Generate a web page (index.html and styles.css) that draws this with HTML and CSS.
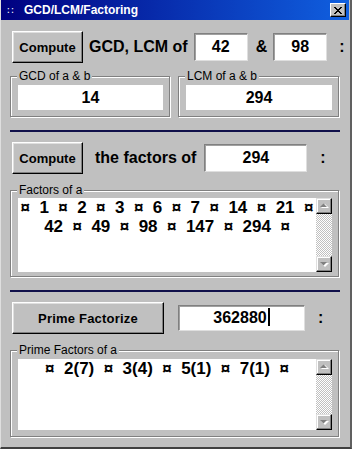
FILE: index.html
```html
<!DOCTYPE html>
<html lang="en">
<head>
  <meta charset="UTF-8" />
  <title>GCD/LCM/Factoring</title>
  <link rel="stylesheet" href="styles.css">
</head>
<body>
  <div class="window">
    <div class="titlebar">
      <span class="sysmenu">∷</span>
      <span class="title">GCD/LCM/Factoring</span>
      <span class="close">
        <svg width="8" height="7" viewBox="0 0 8 7"><path d="M0 0l7 7M1 0l7 7M7 0L0 7M8 0L1 7" stroke="#000" stroke-width="1"/></svg>
      </span>
    </div>

    <div class="client">
      <div class="row row-gcd">
        <button class="btn btn-compute">Compute</button>
        <span class="caption cap-gcd">GCD, LCM of</span>
        <div class="field field-a">42</div>
        <span class="caption amp">&amp;</span>
        <div class="field field-b">98</div>
        <span class="caption colon">:</span>
      </div>

      <div class="groups">
        <fieldset class="group group-gcd">
          <legend>GCD of a &amp; b</legend>
          <div class="result">14</div>
        </fieldset>
        <fieldset class="group group-lcm">
          <legend>LCM of a &amp; b</legend>
          <div class="result">294</div>
        </fieldset>
      </div>

      <div class="sep"></div>

      <div class="row row-factors">
        <button class="btn btn-compute">Compute</button>
        <span class="caption cap-factors">the factors of</span>
        <div class="field field-n">294</div>
        <span class="caption colon">:</span>
      </div>

      <fieldset class="group group-list group-factors">
        <legend>Factors of a</legend>
        <div class="listbox">
          <div class="list-text">
            <div class="line">¤  1  ¤  2  ¤  3  ¤  6  ¤  7  ¤  14  ¤  21  ¤</div>
            <div class="line">42  ¤  49  ¤  98  ¤  147  ¤  294  ¤</div>
          </div>
          <div class="scroll">
            <div class="sbtn"><svg width="14" height="14" viewBox="0 0 14 14"><path d="M4 9h8l-4-4z" fill="#fff"/><path d="M3 8h7L6.5 4.5z" fill="#808080"/></svg></div>
            <div class="track"></div>
            <div class="sbtn"><svg width="14" height="14" viewBox="0 0 14 14"><path d="M4 6h8l-4 4z" fill="#fff"/><path d="M3 5h7L6.5 8.5z" fill="#808080"/></svg></div>
          </div>
        </div>
      </fieldset>

      <div class="sep"></div>

      <div class="row row-prime">
        <button class="btn btn-prime">Prime Factorize</button>
        <div class="field field-p">362880<span class="caret"></span></div>
        <span class="caption colon">:</span>
      </div>

      <fieldset class="group group-list group-prime">
        <legend>Prime Factors of a</legend>
        <div class="listbox">
          <div class="list-text">
            <div class="line">¤  2(7)  ¤  3(4)  ¤  5(1)  ¤  7(1)  ¤</div>
          </div>
          <div class="scroll">
            <div class="sbtn"><svg width="14" height="14" viewBox="0 0 14 14"><path d="M4 9h8l-4-4z" fill="#fff"/><path d="M3 8h7L6.5 4.5z" fill="#808080"/></svg></div>
            <div class="track"></div>
            <div class="sbtn"><svg width="14" height="14" viewBox="0 0 14 14"><path d="M4 6h8l-4 4z" fill="#fff"/><path d="M3 5h7L6.5 8.5z" fill="#808080"/></svg></div>
          </div>
        </div>
      </fieldset>
    </div>
  </div>
</body>
</html>
```

FILE: styles.css
```css
body {
  margin: 0;
  background: #c0c0c0;
  font-family: "Liberation Sans", Arial, sans-serif;
  color: #000;
}

.window {
  width: 352px;
  height: 449px;
  box-sizing: border-box;
  border-left: 1px solid #dfdfdf;
  border-right: 2px solid #606060;
  border-bottom: 2px solid #404040;
  background: #c0c0c0;
}

/* title bar */
.titlebar {
  height: 20px;
  margin-right: 1px;
  display: flex;
  align-items: center;
  background: linear-gradient(to right, #000080, #1060e0);
  color: #fff;
  font-size: 11px;
  font-weight: bold;
}

.sysmenu {
  width: 16px;
  margin-left: 6px;
  font-size: 10px;
  font-family: "DejaVu Sans", sans-serif;
  font-weight: normal;
}

.title {
  margin-left: 1px;
  font-size: 12px;
}

.close {
  margin-left: auto;
  margin-right: 3px;
  width: 16px;
  height: 14px;
  box-sizing: border-box;
  display: flex;
  align-items: center;
  justify-content: center;
  background: #c0c0c0;
  border: 1px solid;
  border-color: #fff #000 #000 #fff;
  box-shadow: inset -1px -1px #808080;
}

/* client area */
.client {
  padding: 0 10px 0 9px;
}

.row {
  display: flex;
  align-items: center;
  padding-left: 2px;
  white-space: nowrap;
}

.row > * { flex-shrink: 0; }

.row-gcd { margin-top: 11px; }
.row-factors { margin-top: 10px; }
.row-prime { margin-top: 10px; }

.btn {
  height: 32px;
  padding: 0;
  box-sizing: border-box;
  font-family: inherit;
  font-size: 13px;
  font-weight: bold;
  color: #000;
  background: #c0c0c0;
  border: 1px solid;
  border-color: #fff #000 #000 #fff;
  box-shadow: inset -1px -1px #808080, inset 1px 1px #dfdfdf;
}

.btn-compute { width: 71px; }

.btn-prime {
  width: 152px;
  letter-spacing: 0.2px;
}

.caption {
  font-size: 16px;
  font-weight: bold;
}

.cap-gcd { margin-left: 6px; }
.cap-factors { margin-left: 12px; }
.amp { margin-left: 8px; }

.field {
  height: 28px;
  box-sizing: border-box;
  background: #fff;
  border: 1px solid;
  border-color: #808080 #dfdfdf #dfdfdf #808080;
  box-shadow: inset 1px 1px #a0a0a0;
  text-align: center;
  font-size: 16px;
  font-weight: bold;
  line-height: 25px;
}

.field-a { width: 54px; margin-left: 6px; }
.field-b { width: 54px; margin-left: 6px; }
.field-n { width: 103px; margin-left: 8px; }
.field-p { width: 127px; height: 26px; line-height: 23px; margin-left: 14px; }

.row-gcd .colon { margin-left: 12px; }
.row-factors .colon { margin-left: 13px; }
.row-prime .colon { margin-left: 13px; }

.caret {
  display: inline-block;
  width: 2px;
  height: 18px;
  margin-left: 1px;
  background: #000;
  vertical-align: -3px;
}

/* group boxes */
.groups {
  display: flex;
  gap: 8px;
  margin-top: 6px;
}

.group {
  margin: 0;
  min-width: 0;
  box-sizing: border-box;
  border: 1px solid #808080;
  box-shadow: inset 1px 1px #fff, 1px 1px #fff;
  padding: 2px 6px 6px 7px;
}

.group legend {
  padding: 0 2px;
  margin-left: -1px;
  background: #c0c0c0;
  font-family: "Liberation Sans Narrow", "Liberation Sans", sans-serif;
  font-stretch: condensed;
  font-size: 12px;
  line-height: 14px;
}

.group-gcd { width: 160px; }
.group-lcm { width: 161px; }

.result {
  height: 25px;
  background: #fff;
  text-align: center;
  font-size: 16px;
  font-weight: bold;
  line-height: 25px;
}

.sep {
  width: 330px;
  height: 2px;
  margin-top: 13px;
  background: #10104a;
}

.group-list {
  width: 329px;
  margin-top: 9px;
}

.group-factors { padding-top: 1px; padding-bottom: 4px; }
.group-prime { padding-top: 2px; padding-bottom: 6px; }

.listbox {
  display: flex;
  background: #fff;
}

.group-factors .listbox { height: 74px; }
.group-prime .listbox { height: 71px; }

.list-text {
  flex: 1;
  font-size: 17px;
  font-weight: bold;
  line-height: 19px;
  text-align: center;
}

.line { white-space: pre; }

.scroll {
  width: 16px;
  display: flex;
  flex-direction: column;
}

.sbtn {
  height: 16px;
  box-sizing: border-box;
  display: flex;
  align-items: center;
  justify-content: center;
  background: #c0c0c0;
  border: 1px solid;
  border-color: #dfdfdf #000 #000 #dfdfdf;
  box-shadow: inset -1px -1px #808080, inset 1px 1px #fff;
}

.track {
  flex: 1;
  background: repeating-conic-gradient(#fff 0 25%, #c0c0c0 0 50%) 0 0 / 2px 2px;
}
```
